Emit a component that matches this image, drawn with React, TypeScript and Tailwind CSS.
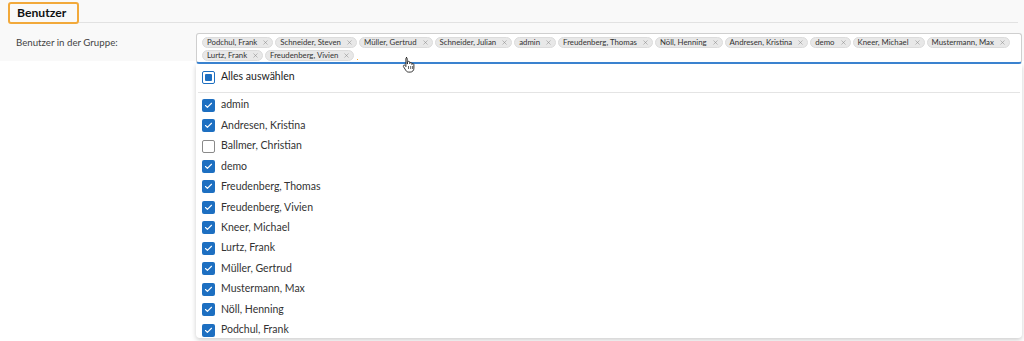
import { Check, X } from "lucide-react";

const selected = [
  "Podchul, Frank",
  "Schneider, Steven",
  "Müller, Gertrud",
  "Schneider, Julian",
  "admin",
  "Freudenberg, Thomas",
  "Nöll, Henning",
  "Andresen, Kristina",
  "demo",
  "Kneer, Michael",
  "Mustermann, Max",
  "Lurtz, Frank",
  "Freudenberg, Vivien",
];

const options = [
  { name: "admin", checked: true },
  { name: "Andresen, Kristina", checked: true },
  { name: "Ballmer, Christian", checked: false },
  { name: "demo", checked: true },
  { name: "Freudenberg, Thomas", checked: true },
  { name: "Freudenberg, Vivien", checked: true },
  { name: "Kneer, Michael", checked: true },
  { name: "Lurtz, Frank", checked: true },
  { name: "Müller, Gertrud", checked: true },
  { name: "Mustermann, Max", checked: true },
  { name: "Nöll, Henning", checked: true },
  { name: "Podchul, Frank", checked: true },
];

const Chip = ({ label }: { label: string }) => (
  <span className="flex items-center gap-[5px] h-[11px] pl-[4px] pr-[3px] rounded-full bg-[#e8e8e8] border border-[#dcdcdc] text-[7.8px] leading-none text-[#333]">
    {label}
    <X className="w-[7px] h-[7px] text-[#888]" strokeWidth={1.8} />
  </span>
);

const Box = ({ checked }: { checked: boolean }) =>
  checked ? (
    <span className="flex items-center justify-center w-[13px] h-[13px] rounded-[2px] bg-[#1d6fc1]">
      <Check className="w-[9px] h-[9px] text-white" strokeWidth={3} />
    </span>
  ) : (
    <span className="w-[13px] h-[13px] rounded-[2px] border border-[#8a8a8a] bg-white" />
  );

const HandCursor = () => (
  <svg
    className="absolute left-[402px] top-[56px]"
    width="14"
    height="17"
    viewBox="0 0 14 17"
  >
    <path
      d="M4 1.5c.8 0 1.2.5 1.2 1.2v5.3l.3-.1V6.4c0-.7.5-1.1 1.1-1.1s1.1.4 1.1 1.1v1.2c0-.7.5-1.1 1.1-1.1s1.1.4 1.1 1.1v.9c0-.6.5-1 1-1s1 .4 1 1.1v3.6c0 2.2-1.4 3.9-3.7 3.9H6.7c-1.3 0-2.1-.6-2.8-1.6L1.5 10.7c-.4-.6-.2-1.2.3-1.5.5-.3 1-.1 1.3.3l.8 1.1V2.7c0-.7.4-1.2 1.1-1.2z"
      fill="#fff"
      stroke="#222"
      strokeWidth="0.9"
      strokeLinejoin="round"
    />
    <path d="M6.5 10v3M8.7 10v3M10.6 10v3" stroke="#222" strokeWidth="0.7" />
  </svg>
);

export default function App() {
  return (
    <div className="relative w-[1024px] h-[341px] overflow-hidden bg-white font-['Lato',sans-serif] text-[#333]">
      <div className="bg-[#f9f9f9] h-[61px]">
        <div className="flex items-end h-[24px] pl-[8px] pr-[6px]">
          <div className="w-[71px] pl-[7px] h-[22px] flex items-center border-2 border-[#f2a93b] rounded-[3px] text-[12.2px] font-bold text-[#111]">
            Benutzer
          </div>
          <div className="flex-1 border-b border-[#e2e2e2] mb-[1px]" />
        </div>
        <div className="flex pt-[9px]">
          <div className="w-[196px] pl-[16px] pt-[2px] text-[9.7px] text-[#444]">
            Benutzer in der Gruppe:
          </div>
          <div className="w-[826px] h-[31px] bg-white border border-[#cfcfcf] border-b-2 border-b-[#3a82cf] rounded-[3px] pl-[5px] pr-[6px] pt-[3px]">
            <div className="flex flex-wrap gap-x-[2px] gap-y-[2px] items-center">
              {selected.map((s) => (
                <Chip key={s} label={s} />
              ))}
              <span className="w-[1px] h-[1px] bg-[#f2a93b] mt-[7px] ml-[1px]" />
            </div>
          </div>
        </div>
      </div>

      <div className="mt-[3px] ml-[196px] w-[826px] h-[274px] bg-white rounded-b-[4px] shadow-[0_2px_5px_rgba(0,0,0,0.2)] px-[6px] pt-[3px]">
        <div className="flex items-center gap-[6px] h-[20px]">
          <span className="flex items-center justify-center w-[13px] h-[13px] rounded-[2px] border border-[#1d6fc1] bg-white">
            <span className="w-[7px] h-[7px] bg-[#1d6fc1] rounded-[1px]" />
          </span>
          <span className="text-[10.5px] text-[#222]">Alles auswählen</span>
        </div>
        <div className="border-b border-[#e4e4e4] mt-[5px] mb-[2px] -mx-[4px]" />
        {options.map((o) => (
          <div key={o.name} className="flex items-center gap-[6px] h-[20.45px]">
            <Box checked={o.checked} />
            <span className="text-[10.5px] text-[#333]">{o.name}</span>
          </div>
        ))}
      </div>

      <HandCursor />
    </div>
  );
}
